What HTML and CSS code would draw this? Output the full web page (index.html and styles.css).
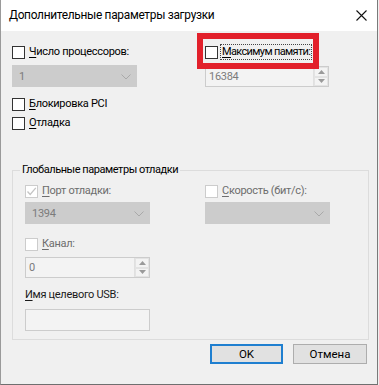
FILE: index.html
```html
<!DOCTYPE html>
<html lang="ru">
<head>
    <meta charset="UTF-8">
    <meta name="viewport" content="width=device-width, initial-scale=1.0">
    <title>Дополнительные параметры загрузки</title>
    <link rel="stylesheet" href="styles.css">
</head>
<body>
<div class="window">
    <header class="titlebar">
        <span class="title">Дополнительные параметры загрузки</span>
        <span class="close">
            <svg width="11" height="11" viewBox="0 0 11 11"><path d="M0.5 0.5L10.5 10.5M10.5 0.5L0.5 10.5" stroke="#111" stroke-width="1.1" fill="none"/></svg>
        </span>
    </header>

    <main class="dialog-body">
        <div class="top-grid">
            <label class="check">
                <span class="box"></span>
                <span class="text"><u>Ч</u>исло процессоров:</span>
            </label>
            <div class="mem-cell">
                <label class="check">
                    <span class="box"></span>
                    <span class="text focus"><u>М</u>аксимум памяти:</span>
                </label>
                <span class="highlight"></span>
            </div>

            <div class="combo">
                <span class="value">1</span>
                <svg class="chevron" width="10" height="6" viewBox="0 0 10 6"><path d="M0.5 0.5L5 5L9.5 0.5" stroke="#a9a9a9" fill="none"/></svg>
            </div>
            <div class="spin">
                <span class="value">16384</span>
                <span class="spin-btns">
                    <span><svg width="7" height="4" viewBox="0 0 7 4"><path d="M0 4L3.5 0L7 4Z" fill="#9a9a9a"/></svg></span>
                    <span><svg width="7" height="4" viewBox="0 0 7 4"><path d="M0 0L3.5 4L7 0Z" fill="#9a9a9a"/></svg></span>
                </span>
            </div>
        </div>

        <label class="check row-pci">
            <span class="box"></span>
            <span class="text"><u>Б</u>локировка PCI</span>
        </label>
        <label class="check row-debug">
            <span class="box"></span>
            <span class="text"><u>О</u>тладка</span>
        </label>

        <fieldset class="group">
            <legend>Глобальные параметры отладки</legend>
            <div class="group-grid">
                <label class="check disabled">
                    <span class="box">
                        <svg width="11" height="11" viewBox="0 0 11 11"><path d="M1.5 5.5L4.2 8.5L9.8 1.8" stroke="#c4c4c4" stroke-width="1.3" fill="none"/></svg>
                    </span>
                    <span class="text"><u>П</u>орт отладки:</span>
                </label>
                <label class="check disabled">
                    <span class="box"></span>
                    <span class="text"><u>С</u>корость (бит/с):</span>
                </label>

                <div class="combo">
                    <span class="value">1394</span>
                    <svg class="chevron" width="10" height="6" viewBox="0 0 10 6"><path d="M0.5 0.5L5 5L9.5 0.5" stroke="#a9a9a9" fill="none"/></svg>
                </div>
                <div class="combo">
                    <span class="value"></span>
                    <svg class="chevron" width="10" height="6" viewBox="0 0 10 6"><path d="M0.5 0.5L5 5L9.5 0.5" stroke="#a9a9a9" fill="none"/></svg>
                </div>
            </div>

            <label class="check disabled row-channel">
                <span class="box"></span>
                <span class="text"><u>К</u>анал:</span>
            </label>
            <div class="spin spin-channel">
                <span class="value">0</span>
                <span class="spin-btns">
                    <span><svg width="7" height="4" viewBox="0 0 7 4"><path d="M0 4L3.5 0L7 4Z" fill="#9a9a9a"/></svg></span>
                    <span><svg width="7" height="4" viewBox="0 0 7 4"><path d="M0 0L3.5 4L7 0Z" fill="#9a9a9a"/></svg></span>
                </span>
            </div>

            <div class="field-label"><u>И</u>мя целевого USB:</div>
            <div class="textbox"></div>
        </fieldset>

        <div class="buttons">
            <button class="btn btn-default">OK</button>
            <button class="btn">Отмена</button>
        </div>
    </main>
</div>
</body>
</html>
```

FILE: styles.css
```css
/* 基本重置 */
* {
    margin: 0;
    padding: 0;
    box-sizing: border-box;
}

html, body {
    background: #f0f0f0;
}

body {
    font-family: Roboto, "Noto Sans", sans-serif;
    font-size: 11px;
    letter-spacing: -0.3px;
    color: #000;
    width: 379px;
    height: 385px;
    overflow: hidden;
}

u {
    text-decoration: underline;
    text-underline-offset: 2px;
}

/* 視窗外框 */
.window {
    width: 378px;
    height: 385px;
    background: #f0f0f0;
    border-left: 1px solid #9a9a9a;
    border-right: 1px solid #7a7a7a;
    border-bottom: 1px solid #6f6f6f;
    display: flex;
    flex-direction: column;
}

/* 標題列 */
.titlebar {
    height: 31px;
    background: #fff;
    display: flex;
    align-items: center;
    justify-content: space-between;
    padding: 0 10px 1px 8px;
}

.titlebar .title {
    font-size: 11.9px;
    color: #000;
}

.titlebar .close {
    display: flex;
    align-items: center;
}

.dialog-body {
    flex: 1;
    padding: 13px 10px 0 11px;
}

/* 核取方塊 */
.check {
    display: flex;
    align-items: center;
    height: 16px;
    line-height: 16px;
    white-space: nowrap;
}

.check .box {
    width: 13px;
    height: 13px;
    border: 1px solid #333;
    background: #fff;
    flex-shrink: 0;
    display: flex;
    align-items: center;
    justify-content: center;
}

.check .text {
    margin-left: 4px;
}

.check.disabled .box {
    border-color: #cccccc;
}

.check.disabled .text {
    color: #6d6d6d;
}

/* 上方兩欄 */
.top-grid {
    display: grid;
    grid-template-columns: 193px 124px;
    row-gap: 5px;
}

.mem-cell {
    position: relative;
}

.mem-cell .text.focus {
    margin-left: 2px;
    padding: 0 1px;
    border: 1px dotted #444;
    line-height: 14px;
    letter-spacing: -0.65px;
}

/* 紅色標示框 */
.highlight {
    position: absolute;
    left: -8px;
    top: -11px;
    width: 122px;
    height: 36px;
    border: 6px solid #e2202b;
}

/* 下拉選單（停用） */
.combo {
    height: 22px;
    width: 125px;
    background: #cccccc;
    border: 1px solid #cccccc;
    display: flex;
    align-items: center;
    justify-content: space-between;
    padding: 0 5px 0 6px;
    color: #7b7b7b;
}

.combo .chevron {
    margin-top: 1px;
}

/* 數字輸入 */
.spin {
    height: 21px;
    width: 124px;
    border: 1px solid #cccccc;
    background: #f3f3f3;
    display: flex;
    align-items: stretch;
    color: #7b7b7b;
    margin-top: 1px;
}

.spin .value {
    flex: 1;
    padding-left: 3px;
    line-height: 19px;
}

.spin-btns {
    width: 15px;
    display: flex;
    flex-direction: column;
    border-left: 1px solid #e0e0e0;
}

.spin-btns span {
    flex: 1;
    display: flex;
    align-items: center;
    justify-content: center;
    border: 1px solid #e3e3e3;
}

.row-pci {
    margin-top: 9px;
}

.row-debug {
    margin-top: 3px;
}

/* 群組方塊 */
.group {
    margin-top: 31px;
    border: 1px solid #dcdcdc;
    padding: 5px 0 8px 12px;
    width: 357px;
}

.group legend {
    margin-left: -5px;
    padding: 0 2px;
    line-height: 16px;
    color: #000;
    letter-spacing: -0.45px;
}

.group-grid {
    display: grid;
    grid-template-columns: 180px 124px;
    row-gap: 3px;
}

.row-channel {
    margin-top: 12px;
}

.spin-channel {
    margin-top: 5px;
    width: 125px;
}

.field-label {
    margin-top: 9px;
    line-height: 16px;
    color: #1a1a1a;
}

.textbox {
    margin-top: 6px;
    width: 125px;
    height: 22px;
    border: 1px solid #cccccc;
    background: #f3f3f3;
}

/* 按鈕 */
.buttons {
    display: flex;
    justify-content: flex-end;
    gap: 10px;
    margin-top: 4px;
}

.btn {
    width: 74px;
    height: 20px;
    background: #e1e1e1;
    border: 1px solid #adadad;
    font-family: inherit;
    font-size: 11.5px;
    letter-spacing: 0;
    color: #000;
}

.btn-default {
    width: 73px;
    border: 2px solid #1f7fd0;
}
```
